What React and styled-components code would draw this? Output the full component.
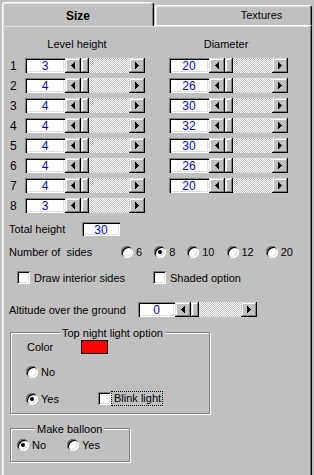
import React from 'react';
import styled, { createGlobalStyle } from 'styled-components';

const GlobalStyle = createGlobalStyle`
  html, body {
    margin: 0;
    padding: 0;
    background: #c0c0c0;
    overflow: hidden;
  }
  body {
    font-family: "Liberation Sans", Arial, sans-serif;
    font-size: 11px;
    color: #000;
  }
`;

const levels = [3, 4, 4, 4, 4, 4, 4, 3];
const diameters = [20, 26, 30, 32, 30, 26, 20];
const sides = [
  { v: 6, checked: false },
  { v: 8, checked: true },
  { v: 10, checked: false },
  { v: 12, checked: false },
  { v: 20, checked: false },
];

function Arrow({ dir }) {
  const d =
    dir === 'left'
      ? 'M0 3h1v1H0z M1 2h1v3H1z M2 1h1v5H2z M3 0h1v7H3z'
      : 'M0 0h1v7H0z M1 1h1v5H1z M2 2h1v3H2z M3 3h1v1H3z';
  return (
    <svg width="4" height="7" viewBox="0 0 4 7" shapeRendering="crispEdges">
      <path d={d} fill="#000" />
    </svg>
  );
}

function ScrollBar({ width }) {
  return (
    <Scroll w={width}>
      <ScrollBtn><Arrow dir="left" /></ScrollBtn>
      <Thumb />
      <Track />
      <ScrollBtn><Arrow dir="right" /></ScrollBtn>
    </Scroll>
  );
}

class App extends React.Component {
  render() {
    return (
      <Page>
        <GlobalStyle />
        <TabRow>
          <ActiveTab>Size</ActiveTab>
          <Tab>Textures</Tab>
        </TabRow>
        <Panel>
          <Headers>
            <HeadLabel w={104} ml={17}>Level height</HeadLabel>
            <HeadLabel w={114} ml={40}>Diameter</HeadLabel>
          </Headers>
          <Rows>
            {levels.map((lv, i) => (
              <Row key={i}>
                <Num>{i + 1}</Num>
                <Edit w={40}>{lv}</Edit>
                <ScrollBar width={80} />
                {diameters[i] !== undefined && (
                  <>
                    <Spacer />
                    <Edit w={40}>{diameters[i]}</Edit>
                    <ScrollBar width={79} />
                  </>
                )}
              </Row>
            ))}
          </Rows>
          <Line mt={9}>
            <Label w={74}>Total height</Label>
            <Edit w={38} h={14}>30</Edit>
          </Line>
          <Line mt={10}>
            <Label w={113} pre>Number of  sides</Label>
            <Options>
              {sides.map((s) => (
                <Option key={s.v}>
                  <Radio checked={s.checked} />
                  <span>{s.v}</span>
                </Option>
              ))}
            </Options>
          </Line>
          <Line mt={13} pl={9}>
            <Option w={136} gap={4}>
              <Check />
              <span>Draw interior sides</span>
            </Option>
            <Option gap={4}>
              <Check />
              <span>Shaded option</span>
            </Option>
          </Line>
          <Line mt={18}>
            <Label w={130}>Altitude over the ground</Label>
            <Edit w={37}>0</Edit>
            <ScrollBar width={82} />
          </Line>
          <Group w={200} h={82} mt={15}>
            <Legend ml={49}>Top night light option</Legend>
            <Line pl={15}>
              <Label w={55}>Color</Label>
              <Swatch />
            </Line>
            <Line mt={12} pl={15}>
              <Option>
                <Radio />
                <span>No</span>
              </Option>
            </Line>
            <Line mt={13} pl={15}>
              <Option w={72}>
                <Radio checked />
                <span>Yes</span>
              </Option>
              <Check />
              <Focus>Blink light</Focus>
            </Line>
          </Group>
          <Group w={120} h={34} mt={14}>
            <Legend ml={24}>Make balloon</Legend>
            <Line mt={3} pl={6}>
              <Option w={50}>
                <Radio checked />
                <span>No</span>
              </Option>
              <Option>
                <Radio />
                <span>Yes</span>
              </Option>
            </Line>
          </Group>
        </Panel>
      </Page>
    );
  }
}
export default App;

const Page = styled.div`
  padding: 2px 0 0 2px;
  width: 310px;
`;

const TabRow = styled.div`
  display: flex;
  align-items: flex-end;
  height: 23px;
`;

const ActiveTab = styled.div`
  position: relative;
  z-index: 1;
  box-sizing: border-box;
  width: 152px;
  height: 24px;
  margin-bottom: -1px;
  background: #c0c0c0;
  border-top: 1px solid #fff;
  border-left: 1px solid #fff;
  border-right: 1px solid #000;
  border-radius: 3px 3px 0 0;
  box-shadow: inset -1px 0 #808080, inset 1px 1px #dfdfdf;
  font-weight: bold;
  font-size: 12px;
  display: flex;
  justify-content: center;
  padding-top: 6px;
`;

const Tab = styled.div`
  flex: 1;
  box-sizing: border-box;
  height: 20px;
  margin-left: 1px;
  background: #c0c0c0;
  border-top: 1px solid #fff;
  border-left: 1px solid #fff;
  border-right: 1px solid #000;
  border-radius: 3px 3px 0 0;
  box-shadow: inset -1px 0 #808080, inset 1px 1px #dfdfdf;
  display: flex;
  justify-content: center;
  padding: 3px 0 0 56px;
`;

const Panel = styled.div`
  box-sizing: border-box;
  width: 310px;
  height: 470px;
  border-top: 1px solid #fff;
  border-left: 1px solid #fff;
  border-right: 1px solid #000;
  box-shadow: inset -1px 0 #808080, inset 1px 1px #dfdfdf;
  padding-left: 5px;
  display: flex;
  flex-direction: column;
`;

const Headers = styled.div`
  display: flex;
  margin-top: 11px;
  line-height: 14px;
`;

const HeadLabel = styled.div`
  width: ${(p) => p.w}px;
  margin-left: ${(p) => p.ml}px;
  text-align: center;
`;

const Rows = styled.div`
  display: flex;
  flex-direction: column;
  gap: 5px;
  margin-top: 7px;
`;

const Row = styled.div`
  display: flex;
  align-items: center;
  height: 15px;
`;

const Num = styled.div`
  width: 15px;
  padding-left: 2px;
  font-size: 12px;
`;

const Spacer = styled.div`
  width: 24px;
`;

const Edit = styled.div`
  box-sizing: border-box;
  width: ${(p) => p.w}px;
  height: ${(p) => p.h || 15}px;
  background: #fff;
  box-shadow: inset 1px 1px #808080, inset 2px 2px #000, inset -1px -1px #fff, inset -2px -2px #dfdfdf;
  color: #0000ff;
  font-size: 12px;
  display: flex;
  align-items: center;
  justify-content: center;
  padding-top: 1px;
`;

const Scroll = styled.div`
  display: flex;
  width: ${(p) => p.w}px;
  height: 15px;
`;

const raised = `
  background: #c0c0c0;
  box-shadow: inset -1px -1px #000, inset 1px 1px #dfdfdf, inset -2px -2px #808080, inset 2px 2px #fff;
`;

const ScrollBtn = styled.div`
  ${raised}
  width: 16px;
  flex: none;
  display: flex;
  align-items: center;
  justify-content: center;
`;

const Thumb = styled.div`
  ${raised}
  width: 8px;
  flex: none;
`;

const Track = styled.div`
  flex: 1;
  background-image: conic-gradient(#fff 25%, #c0c0c0 0 50%, #fff 0 75%, #c0c0c0 0);
  background-size: 2px 2px;
`;

const Line = styled.div`
  display: flex;
  align-items: center;
  margin-top: ${(p) => p.mt || 0}px;
  padding-left: ${(p) => p.pl || 0}px;
`;

const Label = styled.div`
  width: ${(p) => p.w}px;
  flex: none;
  padding-left: 1px;
  box-sizing: border-box;
  white-space: ${(p) => (p.pre ? 'pre' : 'normal')};
`;

const Options = styled.div`
  display: flex;
  gap: 12px;
`;

const Option = styled.div`
  display: flex;
  align-items: center;
  gap: ${(p) => p.gap || 3}px;
  width: ${(p) => (p.w ? p.w + 'px' : 'auto')};
  flex: none;
`;

const Radio = styled.div`
  width: 12px;
  height: 12px;
  flex: none;
  border-radius: 50%;
  background: #fff;
  box-shadow: inset 1px 1px #808080, inset -1px -1px #fff, inset 2px 2px #000, inset -2px -2px #dfdfdf;
  display: flex;
  align-items: center;
  justify-content: center;
  &::after {
    content: '';
    width: 4px;
    height: 4px;
    border-radius: 50%;
    background: ${(p) => (p.checked ? '#000' : 'transparent')};
  }
`;

const Check = styled.div`
  width: 13px;
  height: 13px;
  flex: none;
  background: #fff;
  box-shadow: inset 1px 1px #808080, inset -1px -1px #fff, inset 2px 2px #000, inset -2px -2px #dfdfdf;
`;

const Focus = styled.div`
  border: 1px dotted #000;
  padding: 0 1px 0 2px;
  line-height: 13px;
`;

const Swatch = styled.div`
  width: 27px;
  height: 14px;
  box-sizing: border-box;
  background: #ff0000;
  border: 1px solid #000;
`;

const Group = styled.div`
  box-sizing: border-box;
  width: ${(p) => p.w}px;
  height: ${(p) => p.h}px;
  margin: ${(p) => p.mt}px 0 0 2px;
  border: 1px solid #808080;
  box-shadow: inset 1px 1px #fff, 1px 1px #fff;
  display: flex;
  flex-direction: column;
`;

const Legend = styled.div`
  align-self: flex-start;
  margin: -7px 0 0 ${(p) => p.ml}px;
  padding: 0 2px;
  background: #c0c0c0;
  line-height: 14px;
`;
